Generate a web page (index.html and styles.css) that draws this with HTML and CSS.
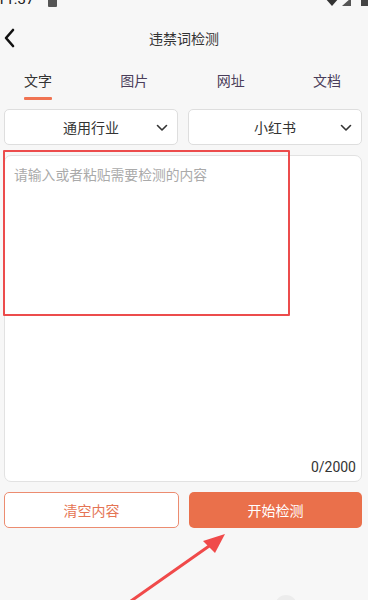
FILE: index.html
```html
<!DOCTYPE html>
<html lang="zh">
<head>
<meta charset="utf-8">
<link rel="stylesheet" href="styles.css">
</head>
<body>
<div class="page">
  <div class="status">
    <span class="time">11:37</span>
    <span class="note"></span>
    <span class="spacer"></span>
    <span class="wifi"></span>
    <span class="signal"></span>
    <span class="battery"></span>
  </div>
  <div class="header">
    <svg class="back" width="14" height="20" viewBox="0 0 14 20"><path d="M10 2 L3 10 L10 18" fill="none" stroke="#111" stroke-width="2.6" stroke-linecap="round" stroke-linejoin="round"/></svg>
    <div class="title">违禁词检测</div>
  </div>
  <div class="tabs">
    <div class="tab active">文字<span class="bar"></span></div>
    <div class="tab">图片</div>
    <div class="tab">网址</div>
    <div class="tab">文档</div>
  </div>
  <div class="selects">
    <div class="select"><span>通用行业</span><svg class="chev" width="12" height="8" viewBox="0 0 12 8"><path d="M1.5 1.5 L6 6 L10.5 1.5" fill="none" stroke="#333" stroke-width="1.6" stroke-linecap="round" stroke-linejoin="round"/></svg></div>
    <div class="select"><span>小红书</span><svg class="chev" width="12" height="8" viewBox="0 0 12 8"><path d="M1.5 1.5 L6 6 L10.5 1.5" fill="none" stroke="#333" stroke-width="1.6" stroke-linecap="round" stroke-linejoin="round"/></svg></div>
  </div>
  <div class="editor">
    <div class="placeholder">请输入或者粘贴需要检测的内容</div>
    <div class="counter">0/2000</div>
    <div class="mark"></div>
  </div>
  <div class="actions">
    <div class="btn outline">清空内容</div>
    <div class="btn filled">开始检测</div>
  </div>
  <svg class="arrow" width="368" height="600" viewBox="0 0 368 600"><line x1="131" y1="601" x2="212" y2="544" stroke="#f04a4a" stroke-width="3" stroke-linecap="round"/><polygon points="225,534 203,541 215,553" fill="#f04a4a"/></svg>
  <div class="home"></div>
</div>
</body>
</html>
```
FILE: styles.css
```css
* { box-sizing: border-box; }
html, body { margin: 0; padding: 0; }
body {
  background: #f7f7f7;
  font-family: "Noto Sans CJK SC", "Noto Sans", Roboto, sans-serif;
  color: #333;
  width: 368px;
  height: 600px;
  overflow: hidden;
}
.page { position: relative; width: 368px; height: 600px; overflow: hidden; }
.status {
  height: 8px;
  display: flex;
  align-items: flex-end;
  overflow: hidden;
  padding: 0 0 0 0;
}
.time {
  font-family: Roboto, sans-serif;
  font-size: 15px;
  line-height: 15px;
  color: #222;
  margin-left: -3px;
  margin-bottom: 1px;
}
.note { width: 9px; height: 8px; background: #555; margin-left: 14px; margin-bottom: 1px; border-radius: 1px; }
.spacer { flex: 1; }
.wifi { width: 0; height: 0; border-left: 7px solid transparent; border-right: 7px solid transparent; border-top: 8px solid #333; margin-bottom: 2px; margin-right: 3px; }
.signal { width: 0; height: 0; border-left: 9px solid transparent; border-bottom: 8px solid #555; margin-bottom: 2px; margin-right: 10px; }
.battery { width: 7px; height: 10px; background: #444; margin-bottom: 2px; margin-right: 0; }
.header {
  height: 60px;
  display: flex;
  align-items: center;
  justify-content: center;
  position: relative;
}
.back { position: absolute; left: 3px; top: 20px; }
.title { font-size: 14px; line-height: 20px; color: #333; }
.tabs {
  height: 32px;
  display: flex;
  justify-content: space-between;
  padding: 2px 27px 0 24px;
}
.tab {
  font-size: 14px;
  line-height: 20px;
  color: #4a3d5a;
  display: flex;
  flex-direction: column;
  align-items: center;
}
.tab.active { color: #333; }
.bar { display: block; width: 28px; height: 2.5px; background: #f07352; margin-top: 7px; border-radius: 1px; }
.selects {
  display: flex;
  gap: 10px;
  padding: 0 6px 0 4px;
  margin-top: 9px;
}
.select {
  flex: 1;
  height: 36px;
  background: #fff;
  border: 1px solid #dedede;
  border-radius: 5px;
  display: flex;
  align-items: center;
  justify-content: center;
  position: relative;
  font-size: 14px;
  color: #333;
}
.chev { position: absolute; right: 9px; top: 14px; }
.editor {
  margin: 10px 6px 0 4px;
  height: 327px;
  background: #fff;
  border: 1px solid #e2e2e2;
  border-radius: 7px;
  position: relative;
  display: flex;
  flex-direction: column;
  justify-content: space-between;
  padding: 8px 5px 4px 9px;
}
.placeholder { font-size: 13.8px; line-height: 20px; color: #aaa; }
.counter { font-family: Roboto, sans-serif; font-size: 14px; line-height: 20px; color: #333; text-align: right; }
.mark {
  position: absolute;
  left: -2px;
  top: -6px;
  width: 287px;
  height: 166px;
  border: 2.5px solid #ec4c4c;
  border-radius: 1px;
}
.actions {
  display: flex;
  gap: 10px;
  padding: 0 6px 0 4px;
  margin-top: 10px;
}
.btn {
  flex: 1;
  height: 36px;
  border-radius: 5px;
  display: flex;
  align-items: center;
  justify-content: center;
  font-size: 14px;
}
.btn.outline { border: 1px solid #ec8c70; color: #e57454; background: #fff; }
.btn.filled { background: #ea704b; color: #fff; }
.arrow { position: absolute; left: 0; top: 0; pointer-events: none; }
.home { position: absolute; left: 275px; top: 595px; width: 22px; height: 22px; border-radius: 50%; background: #ececec; }
```
